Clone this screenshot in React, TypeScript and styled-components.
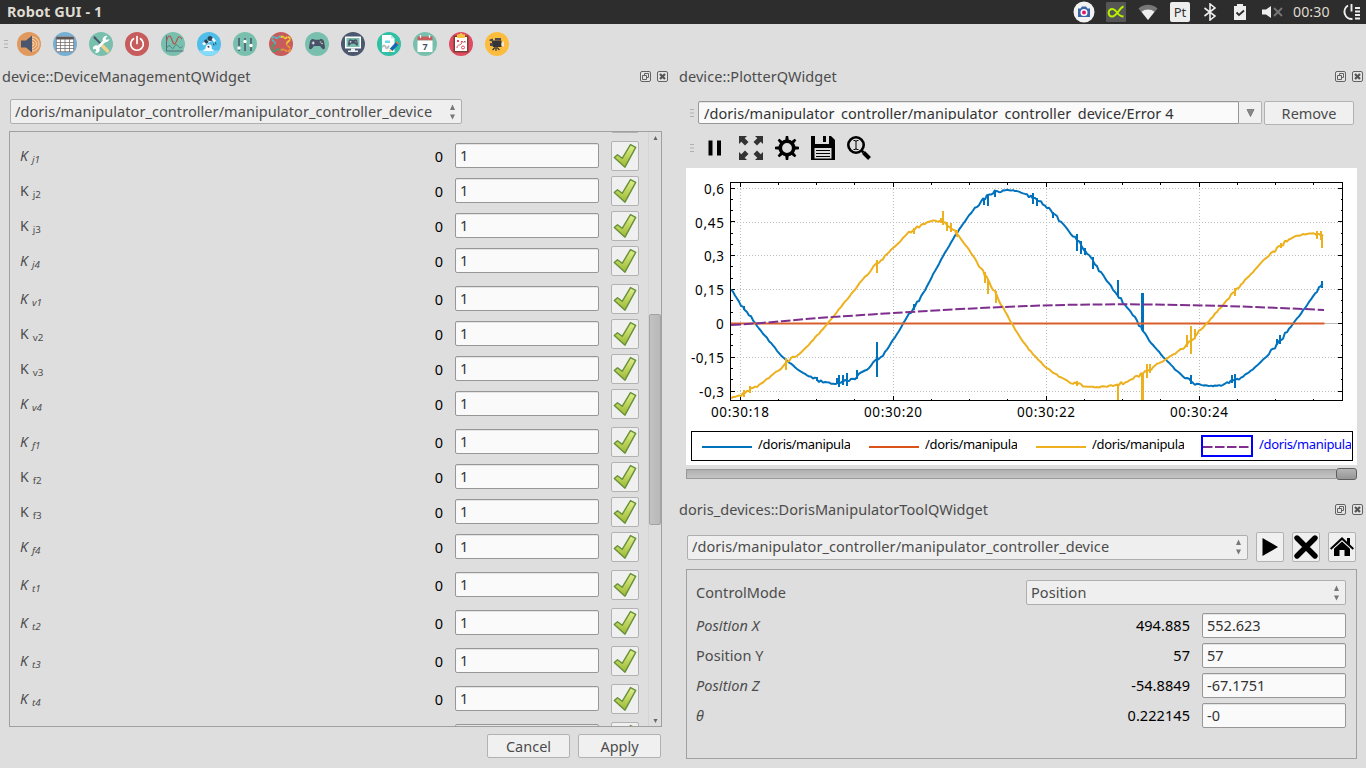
import React from 'react';
import styled, { createGlobalStyle } from 'styled-components';

const Global = createGlobalStyle`
  * { box-sizing: border-box; }
  body { margin: 0; background: #dedede; overflow: hidden; }
  svg { display: block; flex: none; }
`;

const Shell = styled.div`
  width: 1366px;
  height: 768px;
  display: flex;
  flex-direction: column;
  background: #dedede;
  color: #4c4c4c;
  font: 14.5px/20px 'Noto Sans', 'Open Sans', sans-serif;
  overflow: hidden;
`;

const Label = styled.span`
  white-space: nowrap;
  letter-spacing: 0.065px;
  padding-bottom: 2px;
`;

/* ---------- system bar ---------- */

const SystemBar = styled.header`
  height: 24px;
  flex: none;
  display: flex;
  align-items: center;
  justify-content: space-between;
  padding: 0 5px 0 7px;
  background: #2d2d2d;
  color: #dfdbd2;
`;

const WindowTitle = styled(Label)`
  font-weight: 700;
`;

const Indicators = styled.div`
  display: flex;
  align-items: center;
`;

const Clock = styled(Label)`
  width: 38px;
  margin: 0 12px 0 10px;
  padding-bottom: 1px;
  font-size: 14.2px;
`;

const Indicator = styled.svg<{ $gap: number }>`
  margin-left: ${(p) => p.$gap}px;
`;

const KeyboardBadge = styled.span`
  width: 20px;
  height: 20px;
  margin-left: 12px;
  border-radius: 2px;
  background: #eee;
  color: #333;
  font-size: 13px;
  text-align: center;
`;

/* ---------- main tool bar ---------- */

const ToolBar = styled.nav`
  height: 40px;
  flex: none;
  display: flex;
  align-items: center;
  gap: 12px;
  padding-left: 4px;
  & > svg:first-child { margin-right: -3px; }
`;

const Grip = () => (
  <svg width="4" height="8" viewBox="0 0 4 8">
    <path d="M0 .5h4M0 4h4M0 7.5h4" stroke="#b0b0b0" strokeWidth="1" />
  </svg>
);

const Round = ({ color, children }: { color: string; children: React.ReactNode }) => (
  <svg width="24" height="24" viewBox="0 0 24 24">
    <circle cx="12" cy="12" r="12" fill={color} />
    {children}
  </svg>
);

const Pad = ({ x = 4, y = 7, s = 1 }: { x?: number; y?: number; s?: number }) => (
  <g transform={`translate(${x} ${y}) scale(${s})`}>
    <path d="M4 0C2 0 1.2 1 .7 4L0 8.500C0 10.500 2 11 3.200 9.200L5 7h6l1.800 2.200C14 11 16 10.500 16 8.500L15.300 4C14.800 1 14 0 12 0c-1 0-1.500.8-2 .8H6C5.500.8 5 0 4 0z" fill="#475268" />
    <path d="M2.700 4h3M4.200 2.500v3" stroke="#eee" strokeWidth="1.100" />
    <circle cx="11.500" cy="3" r=".8" fill="#e9c35f" />
    <circle cx="13" cy="4.500" r=".8" fill="#ddd" />
  </g>
);

const ToolIcons = () => (
  <>
    <Round color="#e0995e">
      <path d="M4 8.500h5l6-5v17l-6-5H4z" fill="#4b566e" />
      <path d="M15 10a2 2 0 0 1 0 4M15 7.500a4.500 4.500 0 0 1 0 9M15 5a7 7 0 0 1 0 14" fill="none" stroke="#f4d9bb" strokeWidth="1" />
    </Round>
    <Round color="#76afd4">
      <rect x="3" y="4.500" width="18" height="15.500" fill="#fff" />
      <path d="M3 4.500h18v3H3z" fill="#5c5554" />
      <path d="M3 10.500h18M3 13.500h18M3 16.500h18M7.500 7v13M12 7v13M16.500 7v13M3.400 5v14.600h17.200V5" fill="none" stroke="#77706e" strokeWidth=".8" />
    </Round>
    <Round color="#78c0ad">
      <path d="M13.500 14l5 5" stroke="#f3d28c" strokeWidth="3.500" strokeLinecap="round" />
      <path d="M5 5l8 8" stroke="#4b566e" strokeWidth="1.800" />
      <path d="M4.500 4l3 1.500-2 2z" fill="#4b566e" />
      <path d="M7 17.500l10-10" stroke="#fff" strokeWidth="2.600" />
      <path d="M18.500 4l-2 2.500 1 1.500 3-1a4 4 0 0 1-5 3l-2-2a4 4 0 0 1 5-4zM9.500 14.500a3.200 3.200 0 0 0-5.500 3l2.500-.8 1 1.300-1.500 2.500a3.200 3.200 0 0 0 4.500-4z" fill="#fff" />
    </Round>
    <Round color="#c75c5c">
      <path d="M8.500 6.700a6.300 6.300 0 1 0 7 0" fill="none" stroke="#fff" strokeWidth="1.700" strokeLinecap="round" />
      <path d="M12 4.500v7" stroke="#fff" strokeWidth="1.700" strokeLinecap="round" />
    </Round>
    <Round color="#78c0ad">
      <path d="M5.500 3.500v15.500h17" fill="none" stroke="#4b566e" strokeWidth=".8" />
      <path d="M5.500 9c2-7 4-6 5.500-1s3 5.500 4.500 1 3-6 5.500-2" fill="none" stroke="#b5524f" strokeWidth="1.100" />
      <path d="M5.500 16c2-3 3-3 4.500-1s2 2 3.500-.5 2.500-2 4 0 2 1.500 4 0" fill="none" stroke="#4b7c83" strokeWidth="1" />
    </Round>
    <Round color="#50bee8">
      <path d="M2 18.500h20A12 12 0 0 1 2 18.500z" fill="#86dcfa" />
      <path d="M9 14a3 3 0 0 1 5.500 0l.5 4H8zM6.500 17.500h10V19h-10z" fill="#fff" />
      <path d="M5 11.500l8-5 1.500 2.500-7.500 4.500z" fill="#f4f7fb" />
      <path d="M8 8l2.500 3" stroke="#28455c" strokeWidth="3.200" />
      <circle cx="13" cy="6.500" r="2.500" fill="#27465d" />
      <path d="M15.500 6.500l2.500 3" stroke="#fff" strokeWidth="2.300" />
      <path d="M16.500 11.500l.5 2M18.500 10.500l.5 2" stroke="#28455c" strokeWidth="1" />
      <circle cx="11.500" cy="14.800" r="1" fill="#28455c" />
    </Round>
    <Round color="#78c0ad">
      <path d="M6 6v13M12 6v13M18 6v13" stroke="#475268" strokeWidth="1.500" />
      <circle cx="6" cy="16" r="1.700" fill="#fff" />
      <circle cx="12" cy="9.500" r="1.700" fill="#fff" />
      <circle cx="18" cy="13.500" r="1.700" fill="#fff" />
    </Round>
    <Round color="#c75c5c">
      <g fill="none" strokeWidth="1.800" strokeDasharray="3.400 .5">
        <path d="M12 5.500C10 2.500 9 7.500 7 6S3 4 3.200 7s4 2 2.800 5" stroke="#58b9c4" />
        <path d="M6 12c-1.500 2-3.500 2-3 5s3 2.500 4.500 1 3-1 4.500.5" stroke="#36a579" />
        <path d="M12 5.500c2-3 3 2 5 .5s4-1 3.800 1.500-4 2-2.800 4.500" stroke="#f3cf2c" />
        <path d="M12 18.500c1-2 3-1 4.500 0s4.500 1.500 4.500-1.500-3.500-2.500-3-5" stroke="#f09336" />
      </g>
    </Round>
    <Round color="#78c0ad"><Pad y={7} /></Round>
    <Round color="#4c5870">
      <rect x="4" y="4.500" width="16" height="12" rx=".5" fill="#fff" />
      <rect x="5.500" y="6" width="13" height="9" fill="#78c0ad" />
      <Pad x={7} y={7.300} s={0.62} />
      <path d="M10 16.500h4v2h3V20H7v-1.500h3z" fill="#f0f0f0" />
    </Round>
    <Round color="#31bfa5">
      <path d="M5 3h9l3.500 3.500V20H5z" fill="#fff" />
      <path d="M14 3v3.500h3.500z" fill="#bfe6df" />
      <path d="M8 8.500h5v2.500H8z" fill="#6fd5ea" />
      <path d="M5 15.500c2-3 3-2 4 0s2 0 3-2" fill="none" stroke="#b7bfc5" strokeWidth="2" />
      <path d="M14 18l6-6.500" stroke="#1768b3" strokeWidth="3.500" />
      <path d="M20 11.500l1-1" stroke="#f26b4e" strokeWidth="3.500" />
      <path d="M11.800 20l.8-3.500 3 2.500z" fill="#f8cf83" />
    </Round>
    <Round color="#78c0ad">
      <path d="M4.500 4.500h15v4h-15z" fill="#c75c5c" />
      <path d="M4.500 8.500h15V20h-15z" fill="#fff" />
      <path d="M7.500 3v3M16.500 3v3" stroke="#eee" strokeWidth="1.300" />
      <text x="12" y="17.600" fontSize="9" fontWeight="700" textAnchor="middle" fill="#475268" fontFamily="Noto Sans, sans-serif">7</text>
    </Round>
    <Round color="#df4c62">
      <path d="M4.500 3.500h15v17h-15z" fill="#7c3d34" />
      <path d="M6 5h12v14H6z" fill="#fff" />
      <path d="M8 2.500h2L12 .8l2 1.700h2V6H8z" fill="#f7c543" />
      <path d="M8 16c0-5 5-1 5-7l-1.300 1.300M13 9l1.500 1.300M8 8l2 2m0-2l-2 2" fill="none" stroke="#d94b57" strokeWidth="1" />
      <circle cx="14" cy="15.500" r="1.500" fill="none" stroke="#d94b57" />
      <path d="M15 9l1.500 1.500m0-1.500L15 10.500" stroke="#444" strokeWidth=".7" />
    </Round>
    <Round color="#fcbd3e">
      <path d="M7 8.500h9.500V15H8l-1-2z" fill="#353539" />
      <path d="M10 6h6v2.500h-6zM4.500 7.500L8 6.500v3l-3.500-.5zM5 11h3v3H5z" fill="#4a4a4f" />
      <path d="M16.500 11l2.500-2v6l-2.500-1.500z" fill="#f3e7d6" />
      <path d="M10 15.500L7.500 18M11 15v4M12 15.500l2.500 2.500" stroke="#333" strokeWidth="1.200" />
    </Round>
  </>
);

/* ---------- dock widgets ---------- */

const Workspace = styled.main`
  flex: 1;
  display: flex;
  min-height: 0;
`;

const LeftDock = styled.section`
  width: 672px;
  flex: none;
  display: flex;
  flex-direction: column;
`;

const RightColumn = styled.section`
  flex: 1;
  display: flex;
  flex-direction: column;
  padding-left: 7px;
`;

const DockTitle = styled.div<{ $left?: number; $right?: number }>`
  height: 25px;
  flex: none;
  display: flex;
  align-items: center;
  gap: 6px;
  padding: 0 ${(p) => p.$right ?? 3}px 0 ${(p) => p.$left ?? 0}px;
`;

const TitleText = styled(Label)`
  flex: 1;
`;

const DockButtons = () => (
  <>
    <svg width="11" height="11" viewBox="0 0 11 11" fill="none" stroke="#626262">
      <rect x=".5" y=".5" width="10" height="10" rx="1.500" fill="#e4e4e4" />
      <path d="M4.500 4.500v-2h4v4h-2M2.500 4.500h4v4h-4z" />
    </svg>
    <svg width="11" height="11" viewBox="0 0 11 11" fill="none" stroke="#626262">
      <rect x=".5" y=".5" width="10" height="10" rx="1.500" fill="#e4e4e4" />
      <path d="M3 3l5 5M8 3l-5 5" strokeWidth="2.200" stroke="#555" />
    </svg>
  </>
);

const Combo = styled.div<{ $w: number }>`
  width: ${(p) => p.$w}px;
  height: 25px;
  flex: none;
  display: flex;
  align-items: center;
  justify-content: space-between;
  padding: 0 5px 0 4px;
  border: 1px solid #aeaeae;
  border-radius: 2px;
  background: #efefef;
`;

const UpDown = () => (
  <svg width="7" height="16" viewBox="0 0 7 16">
    <path d="M3.500.5L6 6H1zM3.500 15.500L6 10.500H1z" fill="#777" />
  </svg>
);

const PushButton = styled.button<{ $w: number; $h?: number }>`
  width: ${(p) => p.$w}px;
  height: ${(p) => p.$h ?? 24}px;
  flex: none;
  display: flex;
  align-items: center;
  justify-content: center;
  padding: 0;
  border: 1px solid #b2b2b2;
  border-radius: 2px;
  background: #f0f0f0;
  color: #4c4c4c;
  font: inherit;
`;

const Field = styled.div`
  width: 144px;
  height: 25px;
  flex: none;
  display: flex;
  align-items: center;
  padding: 0 0 2px 4px;
  border: 1px solid #979797;
  border-radius: 2px;
  background: #fafafa;
  box-shadow: inset 0 1px 0 #e4e4e4;
  color: #333;
`;

const Value = styled(Label)`
  flex: none;
  padding-right: 12px;
  text-align: right;
  color: #000;
`;

/* ---------- gains list ---------- */

const DeviceCombo = styled(Combo)`
  margin: 10px 0 7px 10px;
`;

const ScrollFrame = styled.div`
  width: 653px;
  height: 596px;
  flex: none;
  display: flex;
  margin-left: 9px;
  border: 1px solid #a0a0a0;
  overflow: hidden;
`;

const GainList = styled.div`
  flex: 1;
  margin-top: -29px;
`;

const GainRow = styled.div<{ $gap: number }>`
  height: 30px;
  display: flex;
  align-items: center;
  margin-bottom: ${(p) => p.$gap}px;
  padding: 0 9px 0 10px;
`;

const GainName = styled.span<{ $italic: boolean }>`
  width: 60px;
  height: 20px;
  font-size: 14px;
  font-style: ${(p) => (p.$italic ? 'italic' : 'normal')};
  small {
    position: relative;
    top: 2px;
    margin-left: 4px;
    font-size: 9.8px;
  }
`;

const GainValue = styled(Value)`
  flex: 1;
  padding-bottom: 0;
`;

const GainField = styled(Field)`
  position: relative;
  top: -0.5px;
  margin-right: 12px;
`;

const ScrollBar = styled.div`
  width: 13px;
  display: flex;
  flex-direction: column;
  align-items: center;
  padding: 4px 0 3px;
  border-left: 1px solid #d4d4d4;
  svg:last-child { margin-top: auto; }
`;

const Thumb = styled.div`
  width: 12px;
  height: 211px;
  margin-top: 173px;
  border: 1px solid #a3a3a3;
  border-radius: 2px;
  background: linear-gradient(90deg, #c3c3c3, #b8b8b8);
`;

const Actions = styled.div`
  display: flex;
  gap: 8px;
  padding: 7px 0 0 487px;
`;

const Check = () => (
  <svg width="28" height="30" viewBox="0 0 28 30">
    <defs>
      <linearGradient id="leaf" x1="0" y1="0" x2="0" y2="1">
        <stop offset="0" stopColor="#e3f08b" />
        <stop offset="1" stopColor="#9cb832" />
      </linearGradient>
    </defs>
    <path d="M3.300 16.500l3.200-2.800 4.700 3.600 8.300-13.700 5.200 2.700L14 26.200z" fill="url(#leaf)" stroke="#65913a" strokeWidth="1.400" strokeLinejoin="round" />
  </svg>
);

type Gain = { base: string; sub: string; italic: boolean; gap: number };

const gains: Gain[] = ['j', 'v', 'f', 't'].flatMap((group) =>
  [1, 2, 3, 4].map((n) => ({
    base: 'K',
    sub: `${group}${n}`,
    italic: group === 't' || n === 1 || n === 4,
    gap: group === 't' || n === 4 ? 8 : 5,
  })),
);

const GainItem = ({ gain }: { gain?: Gain }) => (
  <GainRow $gap={gain ? gain.gap : 8}>
    <GainName $italic={!!gain?.italic}>
      {gain && (
        <>
          {gain.base}
          <small>{gain.sub}</small>
        </>
      )}
    </GainName>
    <GainValue>{gain && '0'}</GainValue>
    <GainField>{gain && '1'}</GainField>
    <PushButton $w={28} $h={30}>
      <Check />
    </PushButton>
  </GainRow>
);

/* ---------- plotter ---------- */

const PlotSource = styled.div`
  display: flex;
  align-items: flex-start;
  margin-top: 12px;
  padding-left: 11px;
`;

const GripSlot = styled.div`
  padding: 8px 4px 0 0;
`;

const EditCombo = styled.div`
  width: 541px;
  height: 23px;
  padding: 1px 5px;
  border: 1px solid #979797;
  border-radius: 2px 0 0 2px;
  background: #fafafa;
  box-shadow: inset 0 1px 0 #e4e4e4;
  color: #333;
`;

const EditText = styled.div`
  height: 17px;
  overflow: hidden;
`;

const DropCell = styled.div`
  width: 23px;
  height: 23px;
  display: flex;
  align-items: center;
  justify-content: center;
  margin-right: 2px;
  border: 1px solid #b2b2b2;
  border-left: 0;
  border-radius: 0 2px 2px 0;
  background: #f0f0f0;
`;

const PlotTools = styled.div`
  height: 43px;
  display: flex;
  align-items: center;
  gap: 12px;
  padding: 3px 0 0 11px;
  & > svg:first-child { margin-right: -3px; }
`;

const PlotCard = styled.div`
  width: 671px;
  height: 297px;
  margin-left: 7px;
  background: #fff;
  color: #000;
  font-size: 13px;
`;

const Legend = styled.div`
  width: 662px;
  height: 30px;
  display: flex;
  align-items: center;
  margin-left: 5px;
  padding-left: 10px;
  border: 1px solid #000;
`;

const LegendItem = styled.div<{ $active?: boolean }>`
  width: 167px;
  flex: none;
  display: flex;
  align-items: center;
  gap: 6px;
  color: ${(p) => (p.$active ? '#0000ff' : '#000')};
  &:last-child { width: 150px; margin-left: -2px; }
`;

const LegendKey = styled.div<{ $active?: boolean }>`
  height: 22px;
  display: flex;
  align-items: center;
  padding-top: 1px;
  border: ${(p) => (p.$active ? '2px solid #0000ff' : '0')};
`;

const LegendText = styled(Label)`
  width: 92px;
  overflow: hidden;
  padding-bottom: 5px;
  letter-spacing: -0.35px;
`;

const Slider = styled.div`
  width: 671px;
  height: 12px;
  display: flex;
  align-items: center;
  justify-content: flex-end;
  margin: 3px 0 17px 7px;
`;

const Groove = styled.div`
  flex: 1;
  height: 10px;
  border: 1px solid #989898;
  border-right: 0;
  background: linear-gradient(#b0b0b0, #c4c4c4);
`;

const SliderHandle = styled.div`
  width: 21px;
  height: 12px;
  border: 1px solid #5f5f5f;
  border-radius: 3px;
  background: linear-gradient(#b5b5b5, #969696);
`;

type Pt = [number, number];

const smooth = (pts: Pt[], x: number) => {
  let i = 0;
  while (i < pts.length - 2 && pts[i + 1][0] < x) i++;
  const p1 = pts[i];
  const p2 = pts[i + 1];
  const p0 = pts[i - 1] ?? p1;
  const p3 = pts[i + 2] ?? p2;
  const h = p2[0] - p1[0];
  const t = (x - p1[0]) / h;
  const m1 = ((p2[1] - p0[1]) / (p2[0] - p0[0])) * h;
  const m2 = ((p3[1] - p1[1]) / (p3[0] - p1[0])) * h;
  const t2 = t * t;
  const t3 = t2 * t;
  return (2 * t3 - 3 * t2 + 1) * p1[1] + (t3 - 2 * t2 + t) * m1 + (3 * t2 - 2 * t3) * p2[1] + (t3 - t2) * m2;
};

const jitter = (n: number) => {
  const v = Math.sin(n * 78.233) * 43758.5453;
  return v - Math.floor(v) - 0.5;
};

/* Samples a curve every two pixels; the ripple grows near the recorded glitches (x, low, high). */
const trace = (pts: Pt[], spikes: [number, number, number][]) => {
  const out: string[] = [];
  const end = pts[pts.length - 1][0];
  let k = 0;
  for (let x = pts[0][0]; x <= end; x += 2) {
    const near = spikes.some(([sx]) => Math.abs(sx - x) < 8);
    const noise = jitter(x) * (near ? 3.6 : 1.2);
    out.push(`${x} ${(smooth(pts, x) + noise).toFixed(1)}`);
    while (k < spikes.length && spikes[k][0] < x + 2) {
      const [sx, a, b] = spikes[k++];
      const y = smooth(pts, Math.min(sx, end)).toFixed(1);
      out.push(`${sx} ${y}`, `${sx} ${a}`, `${sx} ${b}`, `${sx} ${y}`);
    }
  }
  return 'M' + out.join('L');
};

const blue = trace(
  [[731, 289], [740, 303], [755, 323], [770, 342], [785, 359], [802, 372], [815, 379], [825, 381.500], [838, 382.500], [848, 380.500], [856, 377], [865, 371], [877, 360], [885, 352], [893, 340], [905, 321], [915, 306], [925, 290], [935, 271], [945, 253], [955, 236], [965, 221], [975, 208], [985, 198], [993, 192], [1000, 190.500], [1010, 190], [1020, 192], [1033, 198], [1046, 206], [1060, 221], [1075, 238], [1090, 257], [1105, 278], [1118, 296], [1130, 311], [1141, 328], [1147, 337], [1157, 350], [1167, 361], [1177, 371], [1187, 379], [1197, 384], [1210, 386], [1222, 385], [1232, 381], [1242, 377], [1254, 368], [1266, 357], [1278, 343], [1290, 328], [1302, 312], [1312, 298], [1321, 285], [1324, 284]],
  [[744, 306, 310], [817, 377, 381], [837, 378, 384], [839, 375, 387], [843, 375, 385], [847, 373, 386], [857, 370, 379], [877, 342, 377], [914, 304, 310], [984, 200, 205], [988, 197, 206], [995, 191, 197], [1033, 193, 204], [1037, 198, 206], [1053, 212, 218], [1077, 234, 251], [1081, 241, 254], [1085, 248, 255], [1093, 257, 269], [1118, 280, 297], [1142, 293, 330], [1143, 293, 331], [1191, 375, 384], [1232, 375, 383], [1235, 374, 388], [1277, 339, 345], [1280, 335, 344], [1322, 281, 288]],
);

const amber = trace(
  [[731, 398], [740, 395], [750, 390], [760, 384], [770, 377], [785, 364], [800, 353], [815, 338], [830, 320], [845, 302], [860, 283], [877, 264], [893, 248], [908, 234], [918, 227], [930, 221.500], [940, 221], [947, 225], [957, 234], [967, 247], [977, 262], [985, 275], [995, 292], [1003, 307], [1011, 322], [1020, 337], [1032, 353], [1046, 367], [1060, 377], [1073, 383], [1090, 387], [1105, 386.500], [1120, 384], [1135, 378], [1142, 374], [1150, 369], [1165, 360], [1180, 350], [1190, 342], [1200, 331], [1210, 320], [1222, 306], [1235, 291], [1250, 275], [1262, 262], [1275, 250], [1287, 241], [1297, 236], [1307, 234], [1318, 234], [1324, 236]],
  [[744, 390, 397], [750, 386, 393], [786, 358, 370], [877, 260, 273], [914, 228, 234], [941, 218, 223], [943, 211, 225], [947, 222, 231], [951, 223, 232], [957, 230, 237], [985, 272, 283], [988, 279, 294], [996, 291, 303], [1077, 381, 386], [1118, 385, 400], [1142, 376, 400], [1143, 376, 400], [1147, 364, 378], [1150, 364, 373], [1187, 335, 347], [1191, 326, 354], [1195, 329, 338], [1235, 288, 296], [1281, 243, 248], [1317, 231, 239], [1321, 231, 240], [1322, 234, 248]],
);

const majorX = [740.5, 893.5, 1046.5, 1199.5];
const majorY: [number, string][] = [[188.5, '0,6'], [222.5, '0,45'], [255.5, '0,3'], [289.5, '0,15'], [323.5, '0'], [357.5, '-0,15'], [391.5, '-0,3']];
const labelWidth: Record<string, number> = { '0,6': 20, '0,45': 29, '0,3': 20, '0,15': 29, '0': 8, '-0,15': 33, '-0,3': 25 };

const ticks = (() => {
  let d = '';
  for (let i = 0; i < 16; i++) {
    const x = Math.floor(740 + i * 38.25) + 0.5;
    if (x > 1342) break;
    const l = i % 4 === 0 ? 5 : 2.5;
    d += `M${x} 182v${l}M${x} 401v${-l}`;
  }
  for (let i = 0; i < 19; i++) {
    const y = Math.floor(188 + i * 11.28) + 0.5;
    const l = i % 3 === 0 ? 5 : 2.5;
    d += `M730 ${y}h${l}M1343 ${y}h${-l}`;
  }
  return d;
})();

const Chart = () => (
  <svg width="671" height="263" viewBox="686 168 671 263" fontFamily="Noto Sans, sans-serif" fontSize="13.500">
    <clipPath id="plotArea"><rect x="731" y="183" width="612" height="217" /></clipPath>
    <g stroke="#bcbcbc" strokeDasharray="1 2">
      {majorX.map((x) => <path key={x} d={`M${x} 183V400`} />)}
      {majorY.map(([y, t]) => <path key={t} d={`M731 ${y}H1342`} strokeDasharray={t === '0' ? 'none' : undefined} />)}
    </g>
    <path d={ticks} stroke="#000" shapeRendering="crispEdges" />
    <g fill="none" strokeWidth="2" clipPath="url(#plotArea)" strokeLinejoin="bevel">
      <path d={blue} stroke="#0072bd" />
      <path d="M731 323.500H1324.500" stroke="#d95f2b" />
      <path d={amber} stroke="#edb120" />
      <path d="M731 325C770 323 800 319 840 316.500S940 309.500 1020 306.300S1190 303.500 1324 310" stroke="#7e2f8e" strokeDasharray="9.800 2.700" />
    </g>
    <rect x="730.500" y="182.500" width="612" height="218" fill="none" stroke="#000" />
    {majorY.map(([y, t]) => (
      <text key={t} x={724 - labelWidth[t]} y={y + 5} textLength={labelWidth[t]}>{t}</text>
    ))}
    {majorX.map((x, i) => (
      <text key={x} x={x - 29.5} y="417" textLength="58">{`00:30:${18 + i * 2}`}</text>
    ))}
  </svg>
);

const legendColors = ['#0072bd', '#d95319', '#edb120', '#7e2f8e'];

/* ---------- manipulator tool ---------- */

const ToolRow = styled.div`
  display: flex;
  align-items: center;
  gap: 8px;
  margin-top: 10px;
  padding-left: 8px;
`;

const ParamFrame = styled.div`
  width: 671px;
  height: 190px;
  margin: 7px 0 0 7px;
  padding: 10px 10px 0 9px;
  border: 1px solid #a0a0a0;
`;

const ParamRow = styled.div<{ $italic?: boolean }>`
  display: flex;
  align-items: center;
  margin-bottom: 5px;
  & > :first-child { flex: 1; font-style: ${(p) => (p.$italic ? 'italic' : 'normal')}; }
  &:first-child { margin-bottom: 8px; }
`;

const params = [
  { name: 'Position X', now: '494.885', set: '552.623', italic: true },
  { name: 'Position Y', now: '57', set: '57', italic: false },
  { name: 'Position Z', now: '-54.8849', set: '-67.1751', italic: true },
  { name: 'θ', now: '0.222145', set: '-0', italic: true },
];

const devicePath = '/doris/manipulator_controller/manipulator_controller_device';

export default function App() {
  return (
    <Shell>
      <Global />
      <SystemBar>
        <WindowTitle>Robot GUI - 1</WindowTitle>
        <Indicators>
          <Indicator $gap={0} width="22" height="22" viewBox="0 0 22 22">
            <circle cx="11" cy="11" r="10.500" fill="#f2f2f2" />
            <path d="M5 7.500h2.500L9 5.500h4l1.500 2H17v8.500H5z" fill="#3b65a8" />
            <circle cx="11" cy="11.500" r="3.500" fill="#fff" />
            <circle cx="11" cy="11.500" r="2" fill="#e5156d" />
          </Indicator>
          <Indicator $gap={11} width="20" height="20" viewBox="0 0 20 20">
            <rect width="20" height="20" rx="1" fill="#555" />
            <path d="M17.500 4.500C13.500 5.500 11 14.500 6 14.500c-4.500 0-4.500-7.500.5-7.500C11 7 11 14.500 17.500 14.500" fill="none" stroke="#b8f000" strokeWidth="2" />
          </Indicator>
          <Indicator $gap={12} width="20" height="16" viewBox="0 0 20 16">
            <path d="M10 16L.5 4.500a14 14 0 0 1 19 0z" fill="#777" />
            <path d="M10 16L3.500 7.800a10 10 0 0 1 13 0z" fill="#eee" />
          </Indicator>
          <KeyboardBadge>Pt</KeyboardBadge>
          <Indicator $gap={13} width="14" height="18" viewBox="0 0 14 18">
            <path d="M1.500 5l10.500 8-5 4V1l5 4-10.500 8" fill="none" stroke="#eee" strokeWidth="1.600" />
          </Indicator>
          <Indicator $gap={17} width="12" height="16" viewBox="0 0 12 16">
            <path d="M3 0h6v2h3v14H0V2h3z" fill="#eee" />
            <path d="M2.500 8.500l2.500 2.500 5-4.500" fill="none" stroke="#2d2d2d" strokeWidth="1.800" />
          </Indicator>
          <Indicator $gap={16} width="21" height="12" viewBox="0 0 21 12">
            <path d="M0 3.500h4L9 0v12L4 8.500H0z" fill="#eee" />
            <path d="M12 2l8 8M20 2l-8 8" stroke="#777" strokeWidth="1.800" />
          </Indicator>
          <Clock>00:30</Clock>
          <Indicator $gap={0} width="18" height="18" viewBox="0 0 18 18">
            <path d="M5 2.500A7.300 7.300 0 0 0 9.500 16" fill="none" stroke="#eee" strokeWidth="2" />
            <path d="M8.500 1v7.500M12 5h5M12 8.500h5M12 12h5M12 15.500h5" stroke="#eee" strokeWidth="1.900" />
          </Indicator>
        </Indicators>
      </SystemBar>

      <ToolBar>
        <Grip />
        <ToolIcons />
      </ToolBar>

      <Workspace>
        <LeftDock>
          <DockTitle $left={2} $right={4}>
            <TitleText>device::DeviceManagementQWidget</TitleText>
            <DockButtons />
          </DockTitle>
          <DeviceCombo $w={452}>
            <Label>{devicePath}</Label>
            <UpDown />
          </DeviceCombo>
          <ScrollFrame>
            <GainList>
              <GainItem />
              {gains.map((g) => <GainItem key={g.sub} gain={g} />)}
              <GainItem />
            </GainList>
            <ScrollBar>
              <svg width="5" height="5" viewBox="0 0 5 5"><path d="M2.500 0L4.500 4h-4z" fill="#666" /></svg>
              <Thumb />
              <svg width="5" height="5" viewBox="0 0 5 5"><path d="M.5 1h4l-2 4z" fill="#666" /></svg>
            </ScrollBar>
          </ScrollFrame>
          <Actions>
            <PushButton $w={83}>Cancel</PushButton>
            <PushButton $w={83}>Apply</PushButton>
          </Actions>
        </LeftDock>

        <RightColumn>
          <DockTitle>
            <TitleText>device::PlotterQWidget</TitleText>
            <DockButtons />
          </DockTitle>
          <PlotSource>
            <GripSlot><Grip /></GripSlot>
            <EditCombo>
              <EditText><Label>/doris/manipulator_controller/manipulator_controller_device/Error 4</Label></EditText>
            </EditCombo>
            <DropCell>
              <svg width="9" height="8" viewBox="0 0 9 8"><path d="M1 .5h7L4.500 7.500z" fill="#888" stroke="#666" strokeWidth=".7" /></svg>
            </DropCell>
            <PushButton $w={90}>Remove</PushButton>
          </PlotSource>
          <PlotTools>
            <Grip />
            <svg width="24" height="24" viewBox="0 0 24 24"><path d="M5.500 4.500h4v15h-4zM14 4.500h4v15h-4z" /></svg>
            <svg width="24" height="24" viewBox="0 0 24 24" fill="#333">
              <path d="M0 0h8L5.700 2.300 9.500 6 6 9.500 2.300 5.700 0 8zM24 0v8l-2.300-2.300L18 9.500 14.500 6l3.800-3.700L16 0zM0 24v-8l2.300 2.300L6 14.500 9.500 18l-3.800 3.700L8 24zM24 24h-8l2.300-2.300L14.500 18l3.500-3.500 3.700 3.800L24 16z" />
            </svg>
            <svg width="24" height="24" viewBox="0 0 24 24">
              <circle cx="12" cy="12" r="6.700" fill="none" stroke="#000" strokeWidth="3.600" />
              {[0, 45, 90, 135, 180, 225, 270, 315].map((a) => (
                <path key={a} d="M10.200 4.500L10.800 0h2.400l.6 4.500z" transform={`rotate(${a} 12 12)`} />
              ))}
            </svg>
            <svg width="24" height="24" viewBox="0 0 24 24">
              <path d="M0 0h4v8h14V0h2l4 4v20H0z" />
              <path d="M4 0h8v6H4z" fill="#dedede" />
              <path d="M12 0h3v6h-3z" />
              <path d="M15 0h2v6h-2z" fill="#dedede" />
              <path d="M3.500 12h17v10.500h-17z" fill="#dedede" />
              <path d="M5 14.500h14M5 17.500h14M5 20.500h14" stroke="#000" strokeWidth="1.200" />
            </svg>
            <svg width="24" height="24" viewBox="0 0 24 24" fill="none" stroke="#000">
              <circle cx="9" cy="9" r="7.700" strokeWidth="2.600" />
              <path d="M14.500 14.500l2 2" strokeWidth="2.500" />
              <path d="M16.500 16.500l6 6" strokeWidth="4" />
              <path d="M6.500 4.500h1.500l1 .8 1-.8h1.500M6.500 13.500h1.500l1-.8 1 .8h1.500M9 5v8.500" strokeWidth="1" />
            </svg>
          </PlotTools>
          <PlotCard>
            <Chart />
            <Legend>
              {legendColors.map((c, i) => (
                <LegendItem key={c} $active={i === 3}>
                  <LegendKey $active={i === 3}>
                    <svg width={i === 3 ? 48 : 50} height="2">
                      <path d="M0 1h50" stroke={c} strokeWidth="2" strokeDasharray={i === 3 ? '9.500 2.500' : undefined} />
                    </svg>
                  </LegendKey>
                  <LegendText>/doris/manipula</LegendText>
                </LegendItem>
              ))}
            </Legend>
          </PlotCard>
          <Slider>
            <Groove />
            <SliderHandle />
          </Slider>

          <DockTitle>
            <TitleText>doris_devices::DorisManipulatorToolQWidget</TitleText>
            <DockButtons />
          </DockTitle>
          <ToolRow>
            <Combo $w={561}>
              <Label>{devicePath}</Label>
              <UpDown />
            </Combo>
            <PushButton $w={28} $h={30}>
              <svg width="24" height="24" viewBox="0 0 24 24"><path d="M4.500 3v18L20 12z" /></svg>
            </PushButton>
            <PushButton $w={28} $h={30}>
              <svg width="26" height="26" viewBox="0 0 26 26"><path d="M4 4l18 18M22 4L4 22" stroke="#000" strokeWidth="5.400" strokeLinecap="round" /></svg>
            </PushButton>
            <PushButton $w={28} $h={30}>
              <svg width="24" height="24" viewBox="0 0 24 24">
                <path d="M12 2l5 4.700V3h3v6.500l4 3.700-1.300 1.500L12 5 1.300 14.700 0 13.200z" />
                <path d="M12 6.500l8 7.200V21h-5.500v-6h-5v6H4v-7.300z" />
              </svg>
            </PushButton>
          </ToolRow>
          <ParamFrame>
            <ParamRow>
              <Label>ControlMode</Label>
              <Combo $w={320}>
                <Label>Position</Label>
                <UpDown />
              </Combo>
            </ParamRow>
            {params.map((p) => (
              <ParamRow key={p.name} $italic={p.italic}>
                <Label>{p.name}</Label>
                <Value>{p.now}</Value>
                <Field>{p.set}</Field>
              </ParamRow>
            ))}
          </ParamFrame>
        </RightColumn>
      </Workspace>
    </Shell>
  );
}
